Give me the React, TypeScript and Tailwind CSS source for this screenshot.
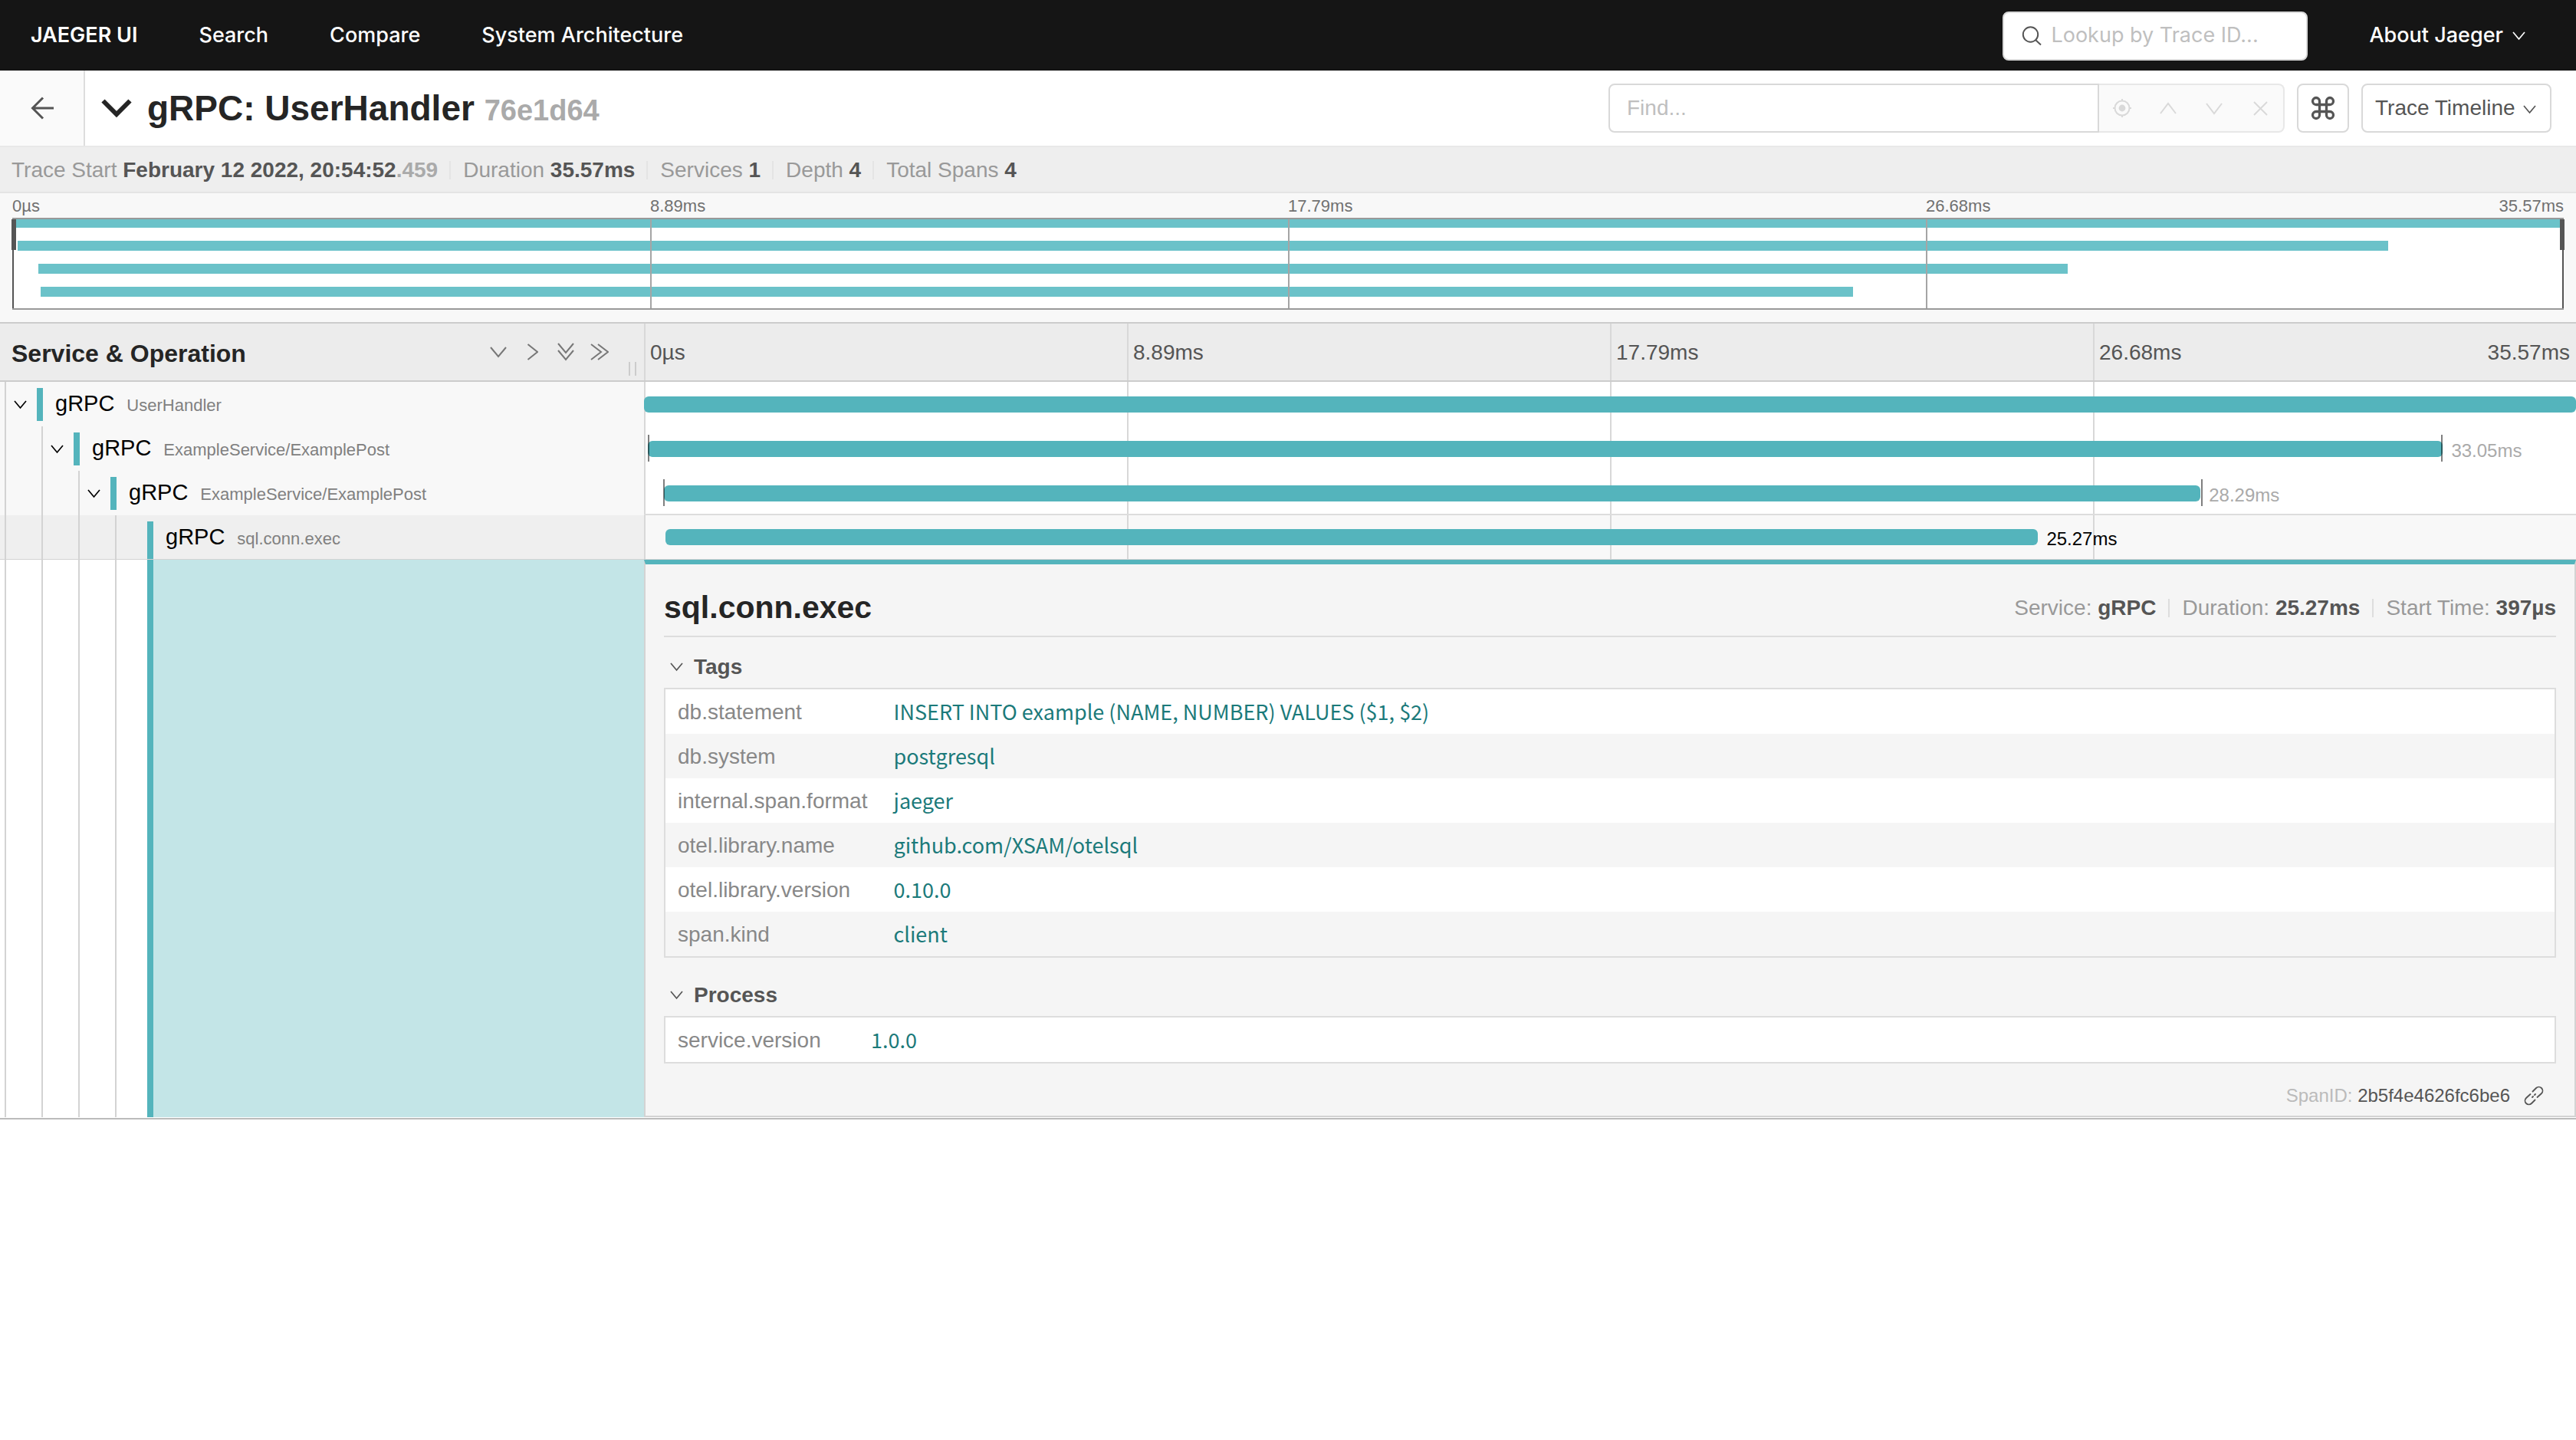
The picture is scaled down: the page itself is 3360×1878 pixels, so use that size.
import React from "react";
import { Command } from "lucide-react";

type Span = {
  id: string;
  service: string;
  operation: string;
  depth: number;
  start: number;
  duration: number;
  label?: string;
  logs: number[];
  expanded?: boolean;
};

type KeyValue = {
  key: string;
  value: string;
};

const TRACE_DURATION = 35.57;

const ticks = ["0µs", "8.89ms", "17.79ms", "26.68ms"];
const lastTick = "35.57ms";

const spans: Span[] = [
  { id: "s1", service: "gRPC", operation: "UserHandler", depth: 0, start: 0, duration: 35.57, logs: [] },
  {
    id: "s2",
    service: "gRPC",
    operation: "ExampleService/ExamplePost",
    depth: 1,
    start: 0.07,
    duration: 33.05,
    label: "33.05ms",
    logs: [0.085, 33.1],
  },
  {
    id: "s3",
    service: "gRPC",
    operation: "ExampleService/ExamplePost",
    depth: 2,
    start: 0.367,
    duration: 28.29,
    label: "28.29ms",
    logs: [0.367, 28.68],
  },
  {
    id: "s4",
    service: "gRPC",
    operation: "sql.conn.exec",
    depth: 3,
    start: 0.397,
    duration: 25.27,
    label: "25.27ms",
    logs: [],
    expanded: true,
  },
];

const tags: KeyValue[] = [
  { key: "db.statement", value: "INSERT INTO example (NAME, NUMBER) VALUES ($1, $2)" },
  { key: "db.system", value: "postgresql" },
  { key: "internal.span.format", value: "jaeger" },
  { key: "otel.library.name", value: "github.com/XSAM/otelsql" },
  { key: "otel.library.version", value: "0.10.0" },
  { key: "span.kind", value: "client" },
];

const processTags: KeyValue[] = [{ key: "service.version", value: "1.0.0" }];

const percent = (ms: number) => `${(ms / TRACE_DURATION) * 100}%`;

type LineIconProps = {
  d: string;
  width: number;
  height: number;
  stroke?: number;
  className?: string;
};

function LineIcon({ d, width, height, stroke = 2, className = "" }: LineIconProps) {
  return (
    <svg
      className={`shrink-0 ${className}`}
      width={width}
      height={height}
      viewBox={`0 0 ${width} ${height}`}
      fill="none"
      stroke="currentColor"
      strokeWidth={stroke}
      aria-hidden="true"
    >
      <path d={d} />
    </svg>
  );
}

function SmallChevron({ className }: { className?: string }) {
  return <LineIcon d="M1 1L8.500 10L16 1" width={17} height={12} stroke={1.7} className={className} />;
}

function LocateIcon() {
  return (
    <svg width="24" height="24" viewBox="0 0 24 24" fill="none" stroke="currentColor" strokeWidth="2" aria-hidden="true">
      <circle cx="12" cy="12" r="9.5" />
      <circle cx="12" cy="12" r="4.4" fill="currentColor" stroke="none" />
      <path d="M12 0V3M12 21V24M0 12H3M21 12H24" />
    </svg>
  );
}

function LinkIcon() {
  return (
    <svg
      width="26"
      height="26"
      viewBox="0 0 26 26"
      fill="none"
      stroke="currentColor"
      strokeWidth="1.8"
      strokeLinecap="round"
      aria-hidden="true"
    >
      <path d="M11.5 7.5L16 3A4.9 4.9 0 0 1 23 10L17.5 15" />
      <path d="M14.5 18.5L10 23A4.9 4.9 0 0 1 3 16L8.500 11" />
      <path d="M11 15L12 14M14 12L15 11" />
    </svg>
  );
}

function TopNav() {
  return (
    <nav className="flex h-[92px] items-center justify-between bg-[#151515] pl-10 pr-[66px] pt-px font-[Inter,sans-serif] text-[27px] font-medium text-white">
      <div className="flex items-center gap-20">
        <a href="#" className="font-semibold">
          JAEGER UI
        </a>
        <a href="#search">Search</a>
        <a href="#compare">Compare</a>
        <a href="#architecture">System Architecture</a>
      </div>
      <div className="flex items-center gap-20">
        <label className="flex h-16 w-[398px] items-center gap-3 rounded-lg border-2 border-[#d9d9d9] bg-white pl-[23px] text-[#555]">
          <svg className="shrink-0" width="26" height="26" viewBox="0 0 26 26" fill="none" stroke="currentColor" strokeWidth="2" aria-hidden="true">
            <circle cx="11.500" cy="11" r="9.700" />
            <path d="M18 18L25 24.500" />
          </svg>
          <input
            className="w-full min-w-0 bg-transparent font-normal outline-none placeholder:text-[#bfbfbf]"
            type="text"
            placeholder="Lookup by Trace ID..."
            aria-label="Lookup by Trace ID"
          />
        </label>
        <button type="button" className="flex items-center gap-3" aria-haspopup="menu">
          About Jaeger
          <SmallChevron />
        </button>
      </div>
    </nav>
  );
}

function TraceHeader() {
  return (
    <header className="flex h-[100px] items-center border-b-2 border-[#e8e8e8] bg-white">
      <a
        href="#search"
        aria-label="Back"
        className="flex w-[111px] items-center justify-center self-stretch border-r-2 border-[#ddd] bg-[#fafafa] text-[#555]"
      >
        <LineIcon d="M30 15H3M16 1.500L2.500 15L16 28.500" width={30} height={30} stroke={3} />
      </a>
      <h1 className="flex flex-1 items-center pl-[21px] text-[#252525]">
        <button type="button" className="flex items-center gap-5 text-[46px] font-bold">
          <LineIcon d="M2.500 2.500L20 20L37.500 2.500" width={40} height={25} stroke={6} />
          <span>
            gRPC: UserHandler <small className="text-[38px] text-[#aaa]">76e1d64</small>
          </span>
        </button>
      </h1>
      <div className="flex items-center gap-4 pr-8 text-[28px] text-[#555]">
        <div className="flex h-16">
          <input
            className="w-[640px] rounded-l-lg border-2 border-[#d9d9d9] bg-white px-[22px] outline-none placeholder:text-[#bfbfbf]"
            type="text"
            placeholder="Find..."
            aria-label="Find in trace"
          />
          <div className="grid w-[242px] grid-cols-4 rounded-r-lg border-2 border-l-0 border-[#e8e8e8] bg-[#fafafa] text-[#d9d9d9]">
            <button type="button" disabled aria-label="Locate match" className="flex items-center justify-center">
              <LocateIcon />
            </button>
            <button type="button" disabled aria-label="Previous match" className="flex items-center justify-center">
              <LineIcon d="M1 15L11 2L21 15" width={22} height={17} />
            </button>
            <button type="button" disabled aria-label="Next match" className="flex items-center justify-center">
              <LineIcon d="M1 2L11 15L21 2" width={22} height={17} />
            </button>
            <button type="button" disabled aria-label="Clear search" className="flex items-center justify-center">
              <LineIcon d="M1 1L18 18M18 1L1 18" width={19} height={19} />
            </button>
          </div>
        </div>
        <button
          type="button"
          aria-label="Keyboard shortcuts"
          className="flex h-16 w-[68px] items-center justify-center rounded-lg border-2 border-[#d9d9d9] bg-white"
        >
          <Command size={36} strokeWidth={2.2} />
        </button>
        <div className="relative">
          <select
            aria-label="Trace view"
            className="h-16 w-[248px] appearance-none rounded-lg border-2 border-[#d9d9d9] bg-white pl-4 outline-none"
          >
            <option>Trace Timeline</option>
          </select>
          <SmallChevron className="pointer-events-none absolute right-5 top-7" />
        </div>
      </div>
    </header>
  );
}

const summary = [
  { label: "Duration", value: "35.57ms" },
  { label: "Services", value: "1" },
  { label: "Depth", value: "4" },
  { label: "Total Spans", value: "4" },
];

function TraceSummary() {
  return (
    <ul className="flex h-[60px] items-center border-b-2 border-[#e4e4e4] bg-[#eee] px-[15px] pt-0.5 text-[28px] leading-none text-[#999]">
      <li>
        Trace Start <strong className="text-[#555]">February 12 2022, 20:54:52</strong>
        <strong className="text-[#aaa]">.459</strong>
      </li>
      {summary.map((item) => (
        <li key={item.label} className="ml-[15px] flex items-center">
          <span className="mr-4 h-6 border-l-2 border-[#e4e4e4]" />
          <span>
            {item.label} <strong className="text-[#555]">{item.value}</strong>
          </span>
        </li>
      ))}
    </ul>
  );
}

function Minimap() {
  return (
    <section className="bg-[#f8f8f8] px-4 pb-4">
      <div className="grid h-8 grid-cols-4 items-center text-[22px] text-[#717171]">
        {ticks.map((tick, i) => (
          <div key={tick} className="flex justify-between">
            <span>{tick}</span>
            {i === ticks.length - 1 && <span>{lastTick}</span>}
          </div>
        ))}
      </div>
      <div className="relative h-[120px] border-y-2 border-[#999] bg-white">
        <div className="-mt-0.5">
          {spans.map((span) => (
            <div key={span.id} className="h-[30px]">
              <div
                className="h-[13px] bg-[#6bc2c9]"
                style={{ marginLeft: percent(span.start), width: percent(span.duration) }}
              />
            </div>
          ))}
        </div>
        <div className="absolute inset-0 grid grid-cols-4">
          {ticks.map((tick) => (
            <div key={tick} className="border-l-2 border-[#a5a5a5] first:border-[#555]" />
          ))}
        </div>
        <div className="absolute inset-y-0 right-0 w-0.5 bg-[#555]" />
        <div className="absolute -left-px top-0 h-10 w-1.5 bg-[#555]" />
        <div className="absolute -right-px top-0 h-10 w-1.5 bg-[#555]" />
        <div className="absolute inset-x-0 -top-0.5 h-0.5 bg-[#999]" />
      </div>
    </section>
  );
}

function ColumnHeader() {
  return (
    <div className="grid h-[78px] grid-cols-[25%_75%] border-y-2 border-[#ccc] bg-[#ececec]">
      <div className="relative flex items-center justify-between pl-[15px] pr-9">
        <h3 className="pt-1 text-[32px] font-bold text-[#252525]">Service &amp; Operation</h3>
        <div className="flex items-center text-[#777]">
          <button type="button" aria-label="Expand one level" className="flex w-11 justify-center">
            <LineIcon d="M1 2L11 14L21 2" width={22} height={16} />
          </button>
          <button type="button" aria-label="Collapse one level" className="flex w-11 justify-center">
            <LineIcon d="M1.500 1L14 11L1.500 21" width={15} height={22} />
          </button>
          <button type="button" aria-label="Expand all" className="flex w-11 justify-center">
            <LineIcon d="M1 1L11 13L21 1M1 10L11 22L21 10" width={22} height={24} />
          </button>
          <button type="button" aria-label="Collapse all" className="flex w-11 justify-center">
            <LineIcon d="M1 1L14 11L1 21M10 1L23 11L10 21" width={24} height={22} />
          </button>
        </div>
        <div className="absolute bottom-1.5 right-2.5 h-[18px] w-2.5 cursor-col-resize border-x-2 border-[#ccc]" />
      </div>
      <div className="grid grid-cols-4 text-[28px] text-[#555]">
        {ticks.map((tick, i) => (
          <div key={tick} className="flex items-center justify-between border-l-2 border-[#d8d8d8] pl-1.5 pr-2 pt-0.5">
            <span>{tick}</span>
            {i === ticks.length - 1 && <span>{lastTick}</span>}
          </div>
        ))}
      </div>
    </div>
  );
}

function IndentGuides({ depth }: { depth: number }) {
  return (
    <>
      <span className="w-2 shrink-0 self-stretch border-r-2 border-[#d3d3d3]" />
      {Array.from({ length: depth }, (_, i) => (
        <span key={i} className="w-12 shrink-0 self-stretch border-r-2 border-[#d3d3d3]" />
      ))}
    </>
  );
}

function SpanRow({ span }: { span: Span }) {
  return (
    <div
      className={`grid h-[58px] grid-cols-[25%_75%] border-b ${span.expanded ? "border-[#d3d3d3]" : "border-white"}`}
    >
      <div className={`flex items-center ${span.expanded ? "bg-[#efefef]" : "bg-[#f8f8f8]"}`}>
        <IndentGuides depth={span.depth} />
        <span className="flex w-10 shrink-0 justify-center pr-1">
          {!span.expanded && (
            <button type="button" aria-label="Toggle children" className="flex">
              <SmallChevron />
            </button>
          )}
        </span>
        <a
          href={`#${span.id}`}
          className={`mt-2 flex items-baseline gap-4 self-stretch whitespace-nowrap border-l-8 border-[#54b4bc] pl-4 ${
            span.expanded ? "" : "mb-2"
          }`}
        >
          <span className="text-[29px] leading-[41px] text-black">{span.service}</span>
          <small className="text-[22px] leading-[41px] text-[#808080]">{span.operation}</small>
        </a>
      </div>
      <div className={`relative ${span.expanded ? "bg-[#f8f8f8] shadow-[0_-2px_0_#ddd]" : "bg-white"}`}>
        <div className="absolute inset-0 grid grid-cols-4">
          {ticks.map((tick) => (
            <div key={tick} className="border-l-2 border-[#d8d8d8]" />
          ))}
        </div>
        <div className="relative flex h-full items-center">
          <div
            className="h-[21px] shrink-0 rounded-md bg-[#54b4bc]"
            style={{ marginLeft: percent(span.start), width: percent(span.duration) }}
          />
          {span.label && (
            <span className={`ml-[11px] pt-1 text-[24px] leading-none ${span.expanded ? "text-black" : "text-[#aaa]"}`}>
              {span.label}
            </span>
          )}
        </div>
        {span.logs.map((log) => (
          <div
            key={log}
            className="absolute top-[11px] h-[35px] w-0.5 -translate-x-1/2 bg-black/50"
            style={{ left: percent(log) }}
          />
        ))}
      </div>
    </div>
  );
}

function KeyValueTable({ rows }: { rows: KeyValue[] }) {
  return (
    <div className="border-2 border-[#ddd] bg-white">
      <table className="w-full text-left text-[28px]">
        <tbody>
          {rows.map((row) => (
            <tr key={row.key} className="h-[58px] even:bg-[#f5f5f5]">
              <th scope="row" className="w-[250px] whitespace-nowrap px-4 pt-0.5 font-normal text-[#888]">
                {row.key}
              </th>
              <td className="pb-0.5 pl-[18px] pr-4 font-['Noto_Sans_CJK_JP',sans-serif] text-[27px] leading-none text-[#1b7a7a]">
                {row.value}
              </td>
            </tr>
          ))}
        </tbody>
      </table>
    </div>
  );
}

function SectionToggle({ title, className }: { title: string; className: string }) {
  return (
    <button type="button" className={`flex h-14 items-center gap-3.5 pl-2 pt-px text-[28px] font-bold text-[#555] ${className}`}>
      <SmallChevron />
      {title}
    </button>
  );
}

const spanFacts = [
  { label: "Service:", value: "gRPC" },
  { label: "Duration:", value: "25.27ms" },
  { label: "Start Time:", value: "397µs" },
];

function SpanDetail() {
  return (
    <div className="grid grid-cols-[25%_75%]">
      <div className="flex">
        <IndentGuides depth={3} />
        <span className="w-10 shrink-0" />
        <span className="flex-1 border-l-8 border-[#54b4bc] bg-[#c3e5e7]" />
      </div>
      <section className="border-x-2 border-b-2 border-t-6 border-[#d3d3d3] border-t-[#54b4bc] bg-[#f5f5f5] px-6">
        <div className="flex h-[95px] items-center justify-between border-b-2 border-[#ddd] pt-5">
          <h2 className="text-[41px] font-bold leading-none text-[#252525]">sql.conn.exec</h2>
          <ul className="flex items-center text-[28px] leading-none text-[#999]">
            {spanFacts.map((fact, i) => (
              <li key={fact.label} className="flex items-center">
                {i > 0 && <span className="mx-4 h-6 border-l-2 border-[#ddd]" />}
                <span>
                  {fact.label} <strong className="text-[#555]">{fact.value}</strong>
                </span>
              </li>
            ))}
          </ul>
        </div>
        <SectionToggle title="Tags" className="mt-2.5" />
        <KeyValueTable rows={tags} />
        <SectionToggle title="Process" className="mt-5" />
        <KeyValueTable rows={processTags} />
        <div className="flex h-[68px] items-center justify-end pr-4 pt-4 text-[24px] text-[#555]">
          <span className="mr-[18px]">
            <span className="text-[#bbb]">SpanID:</span> 2b5f4e4626fc6be6
          </span>
          <button type="button" aria-label="Copy deep link">
            <LinkIcon />
          </button>
        </div>
      </section>
    </div>
  );
}

export default function App() {
  return (
    <div className="min-h-screen bg-white font-['Liberation_Sans',Arial,sans-serif]">
      <TopNav />
      <main>
        <TraceHeader />
        <TraceSummary />
        <Minimap />
        <ColumnHeader />
        <div className="border-b-2 border-[#bbb] pb-px">
          {spans.map((span) => (
            <SpanRow key={span.id} span={span} />
          ))}
          <SpanDetail />
        </div>
      </main>
    </div>
  );
}
